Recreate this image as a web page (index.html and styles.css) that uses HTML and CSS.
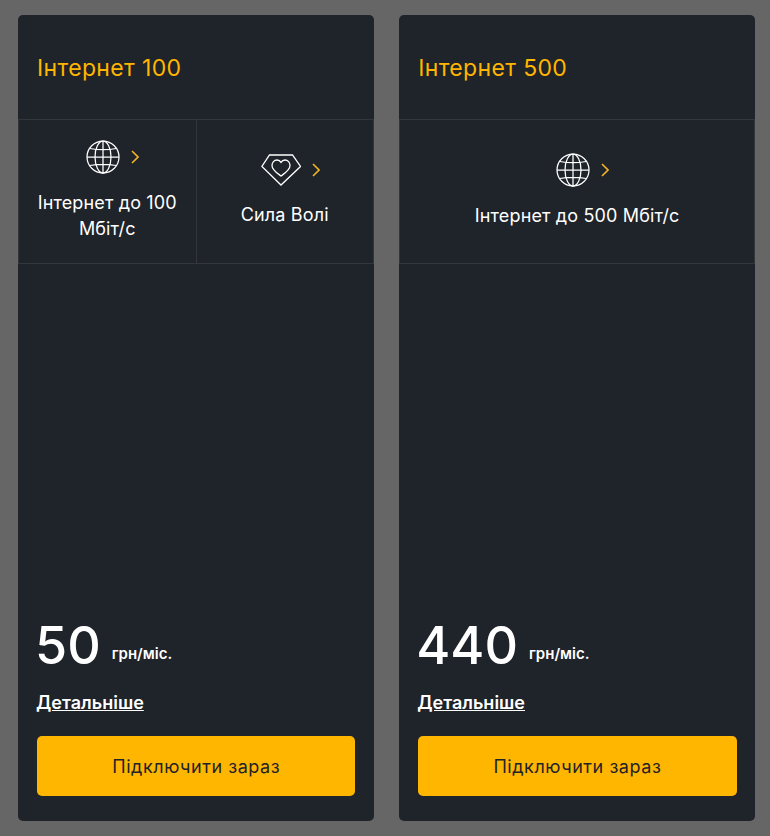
FILE: index.html
```html
<!DOCTYPE html>
<html lang="uk">
<head>
<meta charset="utf-8">
<title>Тарифи</title>
<link rel="stylesheet" href="styles.css">
</head>
<body>
<svg class="defs" width="0" height="0" aria-hidden="true">
  <defs>
    <symbol id="globe" viewBox="0 0 34 34">
      <g fill="none" stroke="#fff" stroke-width="1.25">
        <circle cx="17" cy="17" r="16"/>
        <ellipse cx="17" cy="17" rx="8" ry="16"/>
        <path d="M17 1v32M1 17h32M3.800 8.500q13.200 2.400 26.400 0M3.800 25.500q13.200-2.400 26.400 0"/>
      </g>
    </symbol>
    <symbol id="gem" viewBox="0 0 40 32">
      <g fill="none" stroke="#fff" stroke-width="1.3">
        <path d="M8.500 1h23l8 11.500L20 31 .9 12.500z"/>
        <path d="M20 22c-4.300-3.200-9-6-9-10.500C11 8.400 13.200 6 16 6c1.700 0 3.100.8 4 2.300.9-1.500 2.300-2.300 4-2.300 2.800 0 5 2.400 5 5.500C29 16 24.300 18.800 20 22z"/>
      </g>
    </symbol>
    <symbol id="chev" viewBox="0 0 8 14">
      <path d="M1 1l6 6-6 6" fill="none" stroke="#f0b323" stroke-width="1.600"/>
    </symbol>
  </defs>
</svg>
<main class="plans">
  <article class="card">
    <h2 class="title">Інтернет 100</h2>
    <div class="features">
      <div class="feature">
        <div class="icons"><svg class="ico-globe"><use href="#globe"/></svg><svg class="ico-chev"><use href="#chev"/></svg></div>
        <p class="label">Інтернет до 100 Мбіт/с</p>
      </div>
      <div class="feature">
        <div class="icons icons-gem"><svg class="ico-gem"><use href="#gem"/></svg><svg class="ico-chev"><use href="#chev"/></svg></div>
        <p class="label">Сила Волі</p>
      </div>
    </div>
    <div class="bottom">
      <div class="price"><span class="amount">50</span><span class="unit">грн/міс.</span></div>
      <a class="more" href="#">Детальніше</a>
      <a class="cta" href="#">Підключити зараз</a>
    </div>
  </article>
  <article class="card">
    <h2 class="title">Інтернет 500</h2>
    <div class="features">
      <div class="feature">
        <div class="icons"><svg class="ico-globe"><use href="#globe"/></svg><svg class="ico-chev"><use href="#chev"/></svg></div>
        <p class="label">Інтернет до 500 Мбіт/с</p>
      </div>
    </div>
    <div class="bottom">
      <div class="price"><span class="amount">440</span><span class="unit">грн/міс.</span></div>
      <a class="more" href="#">Детальніше</a>
      <a class="cta" href="#">Підключити зараз</a>
    </div>
  </article>
</main>
</body>
</html>
```
FILE: styles.css
```css
* { box-sizing: border-box; }
html, body { margin: 0; height: 100%; }
body {
  background: #666;
  font-family: Inter, "Noto Sans", sans-serif;
  color: #fff;
}
.defs { position: absolute; }
.plans {
  display: grid;
  grid-template-columns: 356px 356px;
  gap: 25.2px;
  padding: 15px 15px 15px 18px;
  height: 836px;
}
.card {
  display: flex;
  flex-direction: column;
  background: #1f232a;
  border-radius: 5px;
  overflow: hidden;
}
.title {
  margin: 0;
  height: 104px;
  padding: 38px 19px 0;
  font-size: 23px;
  line-height: 30px;
  font-weight: 400;
  letter-spacing: .35px;
  color: #ffb600;
}
.features {
  display: flex;
  height: 145px;
  border-top: 1px solid #33363a;
  border-bottom: 1px solid #33363a;
  border-left: 1px solid #33363a;
}
.feature {
  flex: 1;
  display: flex;
  flex-direction: column;
  align-items: center;
  justify-content: center;
  padding: 0 15px 1px;
  border-right: 1px solid #33363a;
}
.icons {
  display: flex;
  align-items: center;
  gap: 11px;
  margin-left: 10px;
}
.icons-gem { margin-left: 12px; }
.ico-globe { width: 34px; height: 34px; }
.ico-gem { width: 40px; height: 32px; }
.ico-chev { width: 8px; height: 14px; }
.label {
  margin: 16px 0 0;
  font-size: 18px;
  line-height: 26px;
  letter-spacing: .15px;
  text-align: center;
}
.bottom {
  margin-top: auto;
  padding: 0 18.6px 25px 19px;
}
.price {
  display: flex;
  align-items: center;
  gap: 11px;
  margin-left: -2px;
  position: relative;
  top: 1px;
}
.amount {
  font-size: 52px;
  line-height: 60px;
  font-weight: 500;
}
.unit {
  margin-top: 14px;
  font-size: 15px;
  font-weight: 600;
}
.more {
  display: inline-block;
  margin: 16px 0 0 -1px;
  font-size: 18px;
  line-height: 24px;
  font-weight: 600;
  color: #fff;
}
.cta {
  display: flex;
  align-items: center;
  justify-content: center;
  height: 60px;
  margin-top: 21px;
  background: #ffb600;
  border-radius: 5px;
  font-size: 18px;
  letter-spacing: .55px;
  color: #1f232a;
  text-decoration: none;
}
```
